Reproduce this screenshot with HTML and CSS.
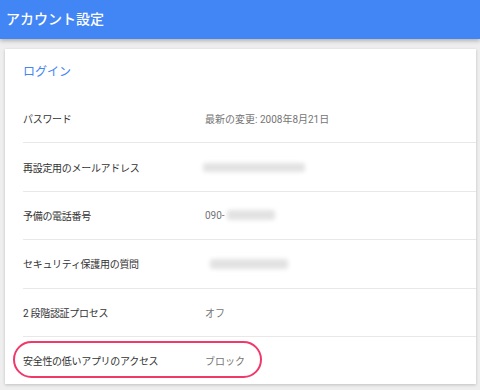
FILE: index.html
```html
<!DOCTYPE html>
<html lang="ja">
<head>
    <meta charset="UTF-8">
    <meta name="viewport" content="width=device-width, initial-scale=1.0">
    <title>アカウント設定</title>
    <link rel="stylesheet" href="styles.css">
</head>
<body>
    <div class="header">アカウント設定</div>
    <div class="main">
        <div class="card">
            <div class="card-title">ログイン</div>
            <div class="row">
                <div class="label">パスワード</div>
                <div class="value">最新の変更: 2008年8月21日</div>
            </div>
            <div class="row">
                <div class="label">再設定用のメールアドレス</div>
                <div class="value"><span class="blur blur-email"></span></div>
            </div>
            <div class="row">
                <div class="label">予備の電話番号</div>
                <div class="value">090-<span class="blur blur-phone"></span></div>
            </div>
            <div class="row">
                <div class="label">セキュリティ保護用の質問</div>
                <div class="value"><span class="blur blur-question"></span></div>
            </div>
            <div class="row">
                <div class="label">2 段階認証プロセス</div>
                <div class="value">オフ</div>
            </div>
            <div class="row row-last highlight">
                <div class="label">安全性の低いアプリのアクセス</div>
                <div class="value">ブロック</div>
            </div>
        </div>
    </div>
</body>
</html>
```

FILE: styles.css
```css
body { margin: 0; background: #eeeeee; font-family: Roboto, "Noto Sans CJK JP", sans-serif; height: 390px; overflow: hidden; }
.header { height: 39px; line-height: 39px; padding-left: 6px; background: #4285f4; color: #fff; font-size: 14px; font-weight: 500; box-shadow: 0 2px 4px rgba(0,0,0,0.25); position: relative; z-index: 1; }
.main { padding: 10px 4px 0 5px; }
.card { background: #fff; padding-left: 18px; box-shadow: 0 1px 3px rgba(0,0,0,0.2); }
.card-title { height: 46px; line-height: 46px; color: #4285f4; font-size: 12px; }
.row { display: flex; align-items: center; height: 47.4px; border-bottom: 1px solid #e8e8e8; font-size: 10px; position: relative; }
.row-last { border-bottom: none; }
.label { width: 182px; color: #333; letter-spacing: -0.3px; }
.value { color: #757575; display: flex; align-items: center; }
.blur { display: inline-block; background: #e2e2e2; filter: blur(2px); border-radius: 3px; }
.blur-email { width: 102px; height: 9px; margin-left: -2px; }
.blur-phone { width: 48px; height: 10px; margin-left: 2px; }
.blur-question { width: 78px; height: 10px; margin-left: 5px; }
.highlight::after { content: ""; position: absolute; left: -10px; top: 4px; width: 245px; height: 33px; border: 2px solid #f0386b; border-radius: 19px; }
```
